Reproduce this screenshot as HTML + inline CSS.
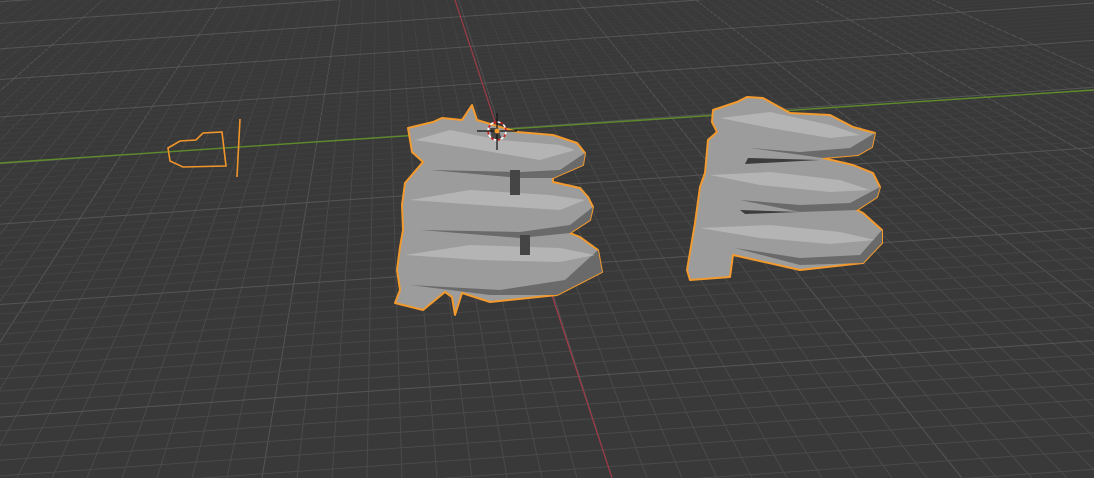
<!DOCTYPE html>
<html><head><meta charset="utf-8"><style>
html,body{margin:0;padding:0;background:#393939;overflow:hidden;width:1094px;height:478px}
svg{display:block}
</style></head><body>
<svg id="s" width="1094" height="478" viewBox="0 0 1094 478" xmlns="http://www.w3.org/2000/svg">
<rect width="1094" height="478" fill="#393939"/>
<g id="grid" stroke-width="1" fill="none"></g>
<line x1="0" y1="163" x2="1094" y2="90" stroke="#5d8a2a" stroke-width="1.4"/>
<line x1="455" y1="0" x2="612" y2="478" stroke="#9a3a48" stroke-width="1.3"/>
<!-- camera -->
<polygon points="168,148 180,141 196,140 203,133 222,132 226,166 183,167 170,161" fill="none" stroke="#f0952a" stroke-width="1.6"/>
<line x1="240" y1="119" x2="237" y2="177" stroke="#f0952a" stroke-width="1.6"/>
<!-- left spring -->
<polygon points="408,128 433,122 442,118 462,120 472,105 477,120 517,132 553,135 577,143 585,153 583,165 553,178 553,182 580,188 588,197 593,207 590,220 570,233 580,237 598,250 602,272 567,290 557,295 490,302 462,293 455,315 452,297 445,292 423,310 395,303 400,290 397,270 400,247 403,230 402,205 405,183 423,162 412,152" fill="#9c9c9c" stroke="#f39a2e" stroke-width="2" stroke-linejoin="round"/>
<g fill="#6a6a6a">
<polygon points="430,170 520,178 553,178 583,165 585,153 560,170 520,172"/>
<polygon points="420,230 520,238 570,233 590,220 593,207 570,225 520,232"/>
<polygon points="410,285 490,295 557,295 602,272 598,250 565,280 500,290"/>
</g>
<g fill="#b4b4b4">
<polygon points="415,140 480,150 540,160 575,150 560,145 500,140 450,130"/>
<polygon points="410,200 480,205 560,210 585,200 550,195 470,190"/>
<polygon points="405,255 480,260 560,262 595,255 560,248 470,245"/>
</g>
<g fill="#454545">
<polygon points="510,170 520,170 520,195 510,195"/>
<polygon points="520,235 530,235 530,255 520,255"/>
<polygon points="490,128 498,128 502,140 492,140"/>
</g>
<!-- right spring -->
<polygon points="713,110 737,102 747,97 763,98 790,113 830,115 853,127 875,133 872,147 858,155 823,158 853,165 873,173 880,187 877,197 857,210 863,213 882,230 882,243 863,263 800,270 733,255 730,277 690,280 687,270 695,223 700,187 705,173 708,140 717,132 712,122" fill="#9c9c9c" stroke="#f39a2e" stroke-width="2" stroke-linejoin="round"/>
<g fill="#6a6a6a">
<polygon points="750,148 823,158 858,155 872,147 875,133 850,148 800,152"/>
<polygon points="740,200 800,212 857,210 877,197 880,187 850,203 800,205"/>
<polygon points="735,248 800,265 863,263 882,243 882,230 860,255 800,258"/>
</g>
<g fill="#b4b4b4">
<polygon points="720,118 770,112 830,125 860,135 830,138 770,128"/>
<polygon points="710,175 770,172 840,180 870,190 830,192 760,185"/>
<polygon points="700,228 770,225 840,232 875,240 830,244 760,238"/>
</g>
<g fill="#3c3c3c">
<polygon points="748,158 820,160 745,164"/>
<polygon points="740,210 800,212 745,214"/>
</g>
<!-- 3D cursor -->
<circle cx="497" cy="131" r="9" fill="none" stroke="#ffffff" stroke-width="1.6" stroke-dasharray="4 3"/>
<circle cx="497" cy="131" r="9" fill="none" stroke="#d02020" stroke-width="1.6" stroke-dasharray="3 4" stroke-dashoffset="3.5"/>
<line x1="497" y1="113" x2="497" y2="150" stroke="#111" stroke-width="1.2"/>
<line x1="477" y1="131" x2="517" y2="131" stroke="#111" stroke-width="1.2"/>
<circle cx="497" cy="131" r="2.5" fill="#f39a2e"/>
</svg>
<script>
var g=document.getElementById('grid'),ns='http://www.w3.org/2000/svg';
function L(a,b,c,d,col){var l=document.createElementNS(ns,'line');l.setAttribute('x1',a);l.setAttribute('y1',b);l.setAttribute('x2',c);l.setAttribute('y2',d);l.setAttribute('stroke',col);g.appendChild(l);}
function mix(o){var a=[57,57,57],b=[74,74,74];var r=Math.round(a[0]+(b[0]-a[0])*o);return 'rgb('+r+','+r+','+r+')';}
var MAJ='#555555';
// columns converge to (380,-245)
var vx=380,vy=-245;
for(var k=-60;k<=40;k++){var bx=612+35*k;var major=(k%10===0);
  var N=12;
  for(var i=0;i<N;i++){var y1=-10+(488/N)*i,y2=-10+(488/N)*(i+1);
    var t1=(y1-vy)/(478-vy),t2=(y2-vy)/(478-vy);
    var col;
    if(major)col=MAJ;else{var sp=35*((y1+y2)/2-vy)/(478-vy);var o=Math.max(0,Math.min(1,(sp-6)/14));col=mix(0.25+0.75*o);}
    L(vx+(bx-vx)*t1,y1,vx+(bx-vx)*t2,y2,col);}
}
// rows
var H=300,s=18/((478+H)*(478+H));
var base=1/(121+H);
for(var n=-400;n<=200;n++){var inv=base+n*s;if(inv<=0)continue;var y=1/inv-H;if(y<-120||y>560)continue;
  var major=(n%10===0);var sp=(y+H)*(y+H)*s;
  var col=major?MAJ:mix(0.2+0.8*Math.max(0,Math.min(1,(sp-3)/12)));
  L(-50,y+0.07*(612+50),1150,y-0.07*(1150-612),col);}
</script>
</body></html>
